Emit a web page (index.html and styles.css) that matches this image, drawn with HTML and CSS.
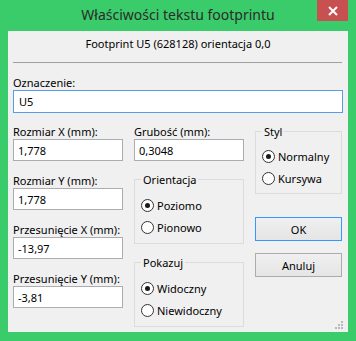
FILE: index.html
```html
<!DOCTYPE html>
<html lang="pl">
<head>
  <meta charset="UTF-8" />
  <title>Właściwości tekstu footprintu</title>
  <link rel="stylesheet" href="styles.css">
</head>
<body>

  <div class="window">
    <!-- PASEK TYTUŁU -->
    <div class="titlebar">
      <span class="title">Właściwości tekstu footprintu</span>
      <span class="close">
        <svg width="10" height="10" viewBox="0 0 10 10">
          <path d="M1 1 L9 9 M9 1 L1 9" stroke="#fff" stroke-width="2" fill="none"/>
        </svg>
      </span>
    </div>

    <!-- ZAWARTOŚĆ -->
    <div class="client">
      <p class="header">Footprint U5 (628128) orientacja 0,0</p>
      <hr class="sep">

      <label class="label top-label">Oznaczenie:</label>
      <input class="field focus" type="text" value="U5">

      <div class="grid">
        <div class="col">
          <label class="label">Rozmiar X (mm):</label>
          <input class="field" type="text" value="1,778">
          <label class="label">Rozmiar Y (mm):</label>
          <input class="field" type="text" value="1,778">
          <label class="label">Przesunięcie X (mm):</label>
          <input class="field" type="text" value="-13,97">
          <label class="label">Przesunięcie Y (mm):</label>
          <input class="field last" type="text" value="-3,81">
        </div>

        <div class="col">
          <label class="label">Grubość (mm):</label>
          <input class="field last" type="text" value="0,3048">

          <fieldset class="group">
            <legend>Orientacja</legend>
            <div class="radio-row"><span class="radio checked"></span>Poziomo</div>
            <div class="radio-row"><span class="radio"></span>Pionowo</div>
          </fieldset>

          <fieldset class="group">
            <legend>Pokazuj</legend>
            <div class="radio-row"><span class="radio checked"></span>Widoczny</div>
            <div class="radio-row"><span class="radio"></span>Niewidoczny</div>
          </fieldset>
        </div>

        <div class="col">
          <fieldset class="group styl">
            <legend>Styl</legend>
            <div class="radio-row"><span class="radio checked"></span>Normalny</div>
            <div class="radio-row"><span class="radio"></span>Kursywa</div>
          </fieldset>

          <button class="btn default">OK</button>
          <button class="btn">Anuluj</button>
        </div>
      </div>

      <svg class="grip" width="8" height="8" viewBox="0 0 8 8">
        <rect x="6" y="0" width="2" height="2" fill="#b8b8b8"/>
        <rect x="3" y="3" width="2" height="2" fill="#b8b8b8"/>
        <rect x="6" y="3" width="2" height="2" fill="#b8b8b8"/>
        <rect x="0" y="6" width="2" height="2" fill="#b8b8b8"/>
        <rect x="3" y="6" width="2" height="2" fill="#b8b8b8"/>
        <rect x="6" y="6" width="2" height="2" fill="#b8b8b8"/>
      </svg>
    </div>
  </div>

</body>
</html>
```

FILE: styles.css
```css
body {
  margin: 0;
  font-family: "Noto Sans", "Liberation Sans", sans-serif;
  font-size: 11px;
  color: #000;
}

.window {
  width: 356px;
  height: 341px;
  background: #3acb6a;
  display: flex;
  flex-direction: column;
}

.titlebar {
  height: 31px;
  flex: none;
  display: grid;
  grid-template-columns: 1fr auto 1fr;
}

.title {
  grid-column: 2;
  font-size: 14px;
  line-height: 30px;
  color: #2b2b2b;
}

.close {
  grid-column: 3;
  justify-self: end;
  width: 31px;
  height: 21px;
  margin-right: 8px;
  background: #c75050;
  display: flex;
  align-items: center;
  justify-content: center;
}

.client {
  position: relative;
  flex: 1;
  margin: 0 8px 9px;
  padding: 0 5px;
  background: #f0f0f0;
}

.header {
  margin: 5px 0 0;
  line-height: 15px;
  text-align: center;
}

.sep {
  margin: 11px 1px 0 0;
  height: 0;
  border: 0;
  border-top: 1px solid #a0a0a0;
}

.label {
  display: block;
  line-height: 15px;
}

.top-label {
  margin-top: 12px;
}

.field {
  display: block;
  width: 100%;
  height: 22px;
  margin: 0 0 12px;
  padding: 0 4px;
  box-sizing: border-box;
  border: 1px solid #abadb3;
  background: #fff;
  font-family: inherit;
  font-size: 11px;
  color: #000;
  outline: none;
}

.field.focus {
  height: 23px;
  margin-bottom: 0;
  border-color: #569de5;
  padding-left: 5px;
}

.field.last {
  margin-bottom: 0;
}

.grid {
  margin-top: 11px;
  display: grid;
  grid-template-columns: 110px 110px 87px;
  column-gap: 11px;
}

.col {
  display: flex;
  flex-direction: column;
}

.group {
  margin: 11px 0 0;
  padding: 7px 5px 5px 6px;
  border: 1px solid #dcdcdc;
  min-width: 0;
}

.group legend {
  padding: 0 2px;
  line-height: 15px;
}

.group.styl {
  margin-top: 0;
  padding-top: 6px;
  padding-bottom: 4px;
}

.radio-row {
  height: 22px;
  display: flex;
  align-items: center;
  gap: 3px;
}

.radio {
  width: 13px;
  height: 13px;
  box-sizing: border-box;
  border: 1px solid #333;
  border-radius: 50%;
  background: #fff;
  display: flex;
  align-items: center;
  justify-content: center;
}

.radio.checked::after {
  content: "";
  width: 5px;
  height: 5px;
  border-radius: 50%;
  background: #1a1a1a;
}

.btn {
  height: 24px;
  margin-top: 12px;
  border: 1px solid #acacac;
  background: linear-gradient(#f0f0f0, #e5e5e5);
  font-family: inherit;
  font-size: 11px;
  color: #000;
  padding: 0;
}

.btn.default {
  margin-top: 23px;
  border-color: #3399ff;
}

.grip {
  position: absolute;
  right: 5px;
  bottom: 3px;
}
```
